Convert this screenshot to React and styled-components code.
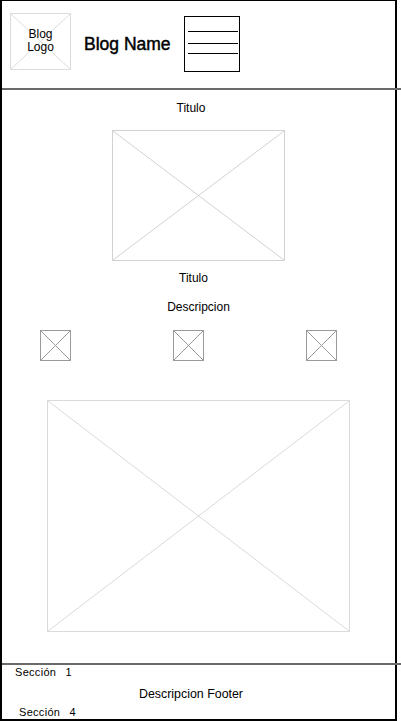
import React from 'react';
import styled, { createGlobalStyle } from 'styled-components';

const GlobalStyle = createGlobalStyle`
  html, body {
    margin: 0;
    padding: 0;
    background: #fff;
  }
  body {
    font-family: "Liberation Sans", Arial, sans-serif;
    color: #000;
  }
`;

const Frame = styled.div`
  box-sizing: border-box;
  width: 397px;
  height: 721px;
  border: 2px solid #000;
  border-top-width: 1px;
  display: flex;
  flex-direction: column;
  background: #fff;
`;

const Header = styled.header`
  height: 87px;
  display: flex;
  align-items: center;
  padding-left: 8px;
`;

const Divider = styled.div`
  flex-shrink: 0;
  width: 399px;
  height: 2px;
  background: #6a6a6a;
`;

const PlaceholderBox = styled.div`
  box-sizing: border-box;
  flex-shrink: 0;
  width: ${p => p.$w}px;
  height: ${p => p.$h}px;
  margin-top: ${p => p.$top || 0}px;
  margin-bottom: ${p => p.$bottom || 0}px;
  border: 1px solid ${p => p.$color};
  display: grid;

  & > * {
    grid-area: 1 / 1;
  }

  svg {
    display: block;
    width: 100%;
    height: 100%;
  }
`;

const LogoText = styled.div`
  align-self: center;
  justify-self: center;
  text-align: center;
  font-size: 12px;
  line-height: 13px;
`;

const BlogName = styled.h1`
  margin: 0 0 2px 13px;
  font-size: 17.5px;
  line-height: 20px;
  font-weight: normal;
  -webkit-text-stroke: 0.45px #000;
  white-space: nowrap;
`;

const MenuButton = styled.div`
  box-sizing: border-box;
  width: 56px;
  height: 56px;
  margin: 0 0 2px 13px;
  border: 1px solid #000;

  svg {
    display: block;
  }
`;

const Main = styled.main`
  flex: 1;
  display: flex;
  flex-direction: column;
  align-items: center;
`;

const Caption = styled.div`
  font-size: 12px;
  line-height: 14px;
  margin-top: ${p => p.$top || 0}px;
  margin-right: ${p => p.$shift || 0}px;
  white-space: nowrap;
`;

const IconRow = styled.div`
  align-self: stretch;
  display: flex;
  gap: 102px;
  padding-left: 38px;
  margin-top: 16px;
`;

const Footer = styled.footer`
  display: flex;
  flex-direction: column;
`;

const Section = styled.div`
  font-size: 11px;
  line-height: 14px;
  letter-spacing: 0.3px;
  word-spacing: 6px;
  padding-left: ${p => p.$indent}px;
  margin-top: ${p => p.$top || 0}px;
`;

const FooterText = styled.div`
  align-self: center;
  font-size: 12.4px;
  line-height: 14px;
  margin-top: 8px;
  margin-right: 15px;
`;

const Cross = ({ color }) => (
  <svg viewBox="0 0 100 100" preserveAspectRatio="none">
    <line x1="0" y1="0" x2="100" y2="100" stroke={color} strokeWidth="1" vectorEffect="non-scaling-stroke" />
    <line x1="100" y1="0" x2="0" y2="100" stroke={color} strokeWidth="1" vectorEffect="non-scaling-stroke" />
  </svg>
);

const Placeholder = ({ w, h, color, top, bottom, children }) => (
  <PlaceholderBox $w={w} $h={h} $color={color} $top={top} $bottom={bottom}>
    <Cross color={color} />
    {children}
  </PlaceholderBox>
);

const MenuIcon = () => (
  <svg width="54" height="54" viewBox="0 0 54 54">
    <g stroke="#000" strokeWidth="1">
      <line x1="3" y1="14.5" x2="53" y2="14.5" />
      <line x1="3" y1="26.5" x2="53" y2="26.5" />
      <line x1="3" y1="36.5" x2="53" y2="36.5" />
    </g>
  </svg>
);

const App = () => (
  <>
    <GlobalStyle />
    <Frame>
      <Header>
        <Placeholder w={61} h={57} color="#dcdcdc" bottom={7}>
          <LogoText>Blog<br />Logo</LogoText>
        </Placeholder>
        <BlogName>Blog Name</BlogName>
        <MenuButton>
          <MenuIcon />
        </MenuButton>
      </Header>
      <Divider />

      <Main>
        <Caption $top={11} $shift={15}>Titulo</Caption>
        <Placeholder w={173} h={131} color="#d2d2d2" top={15} />
        <Caption $top={10} $shift={10}>Titulo</Caption>
        <Caption $top={15}>Descripcion</Caption>
        <IconRow>
          <Placeholder w={31} h={31} color="#9a9a9a" />
          <Placeholder w={31} h={31} color="#9a9a9a" />
          <Placeholder w={31} h={31} color="#9a9a9a" />
        </IconRow>
        <Placeholder w={303} h={232} color="#dadada" top={39} />
      </Main>

      <Footer>
        <Divider />
        <Section $indent={13}>Sección 1</Section>
        <FooterText>Descripcion Footer</FooterText>
        <Section $indent={17} $top={4}>Sección 4</Section>
      </Footer>
    </Frame>
  </>
);

export default App;
